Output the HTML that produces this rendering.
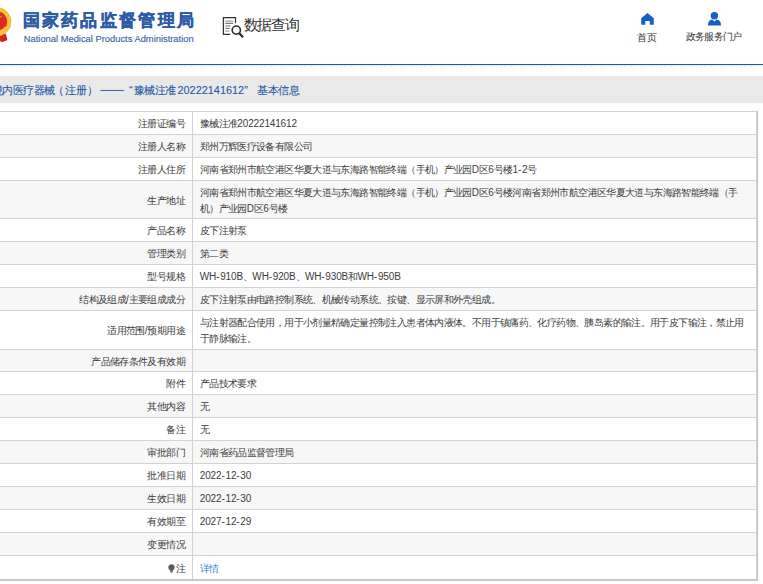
<!DOCTYPE html>
<html><head><meta charset="utf-8">
<style>
html,body{margin:0;padding:0;width:763px;height:584px;overflow:hidden;background:#fff;}
body{position:relative;font-family:"Liberation Sans",sans-serif;color:#333;}
i{font-style:normal;}
.a{position:absolute;white-space:nowrap;}
#hdr-title{left:22.5px;top:9.2px;font-size:17px;font-weight:bold;color:#2d5ca6;letter-spacing:2.3px;line-height:24px;-webkit-text-stroke:0.4px #2d5ca6;}
#hdr-en{left:23.8px;top:33.1px;font-size:9.35px;color:#3a64a8;-webkit-text-stroke:0.15px #3a64a8;line-height:12px;}
#sq{left:243.5px;top:14px;font-size:15px;color:#333;line-height:22px;letter-spacing:-1.25px;}
#home-t{left:637px;top:31px;font-size:10px;line-height:14px;color:#333;letter-spacing:-0.3px;}
#gov-t{left:686px;top:30px;font-size:10px;line-height:14px;color:#333;letter-spacing:-0.8px;}
#bline{left:0;top:64px;width:763px;height:1px;background:#2c5684;}
#hatch{left:0;top:65px;width:763px;height:3px;
 background:
  linear-gradient(#def4fb,#def4fb) 0 0/100% 1px no-repeat,
  repeating-linear-gradient(90deg,#fff 0 1px,#d6e2f2 1px 2px,#fff 2px 4px,#d6e2f2 4px 5px,#fff 5px 10px) 0 1px/100% 1px no-repeat,
  repeating-linear-gradient(90deg,#ececec 0 1px,#fff 1px 3px,#ececec 3px 4px,#fff 4px 6px,#ececec 6px 7px,#fff 7px 10px) 0 2px/100% 1px no-repeat;}
#band{left:0;top:76px;width:763px;height:27px;background:#e9e9e9;}
.bt{top:82px;font-size:11px;line-height:16px;color:#1f5aa8;letter-spacing:-0.5px;-webkit-text-stroke:0.1px #1f5aa8;}
.bdash{font-size:11.6px;letter-spacing:0;margin-top:-1px}
.bd{font-size:10.9px;letter-spacing:0}
.row{position:absolute;left:0;width:756px;border-bottom:1px solid #d2d2d2;}
.row.g{background:#f7f7f7;}
.lab{position:absolute;right:571px;font-size:10px;letter-spacing:-0.15px;line-height:16px;text-align:right;white-space:nowrap;color:#3c3c3c;}
.val{position:absolute;left:199.8px;font-size:10px;letter-spacing:-0.15px;line-height:16px;white-space:nowrap;color:#3c3c3c;}
.c{font-size:10px;letter-spacing:-0.62px;}
.h{letter-spacing:0.7px;}
.link{color:#2f84dc;}
.pin{vertical-align:-1px;margin-right:1px;}
#vdiv{left:192px;top:111px;width:1px;height:468px;background:#d2d2d2;}
#rb{left:756px;top:111px;width:2px;height:470px;background:linear-gradient(90deg,#d4d4d4 0 1px,#c2c2c2 1px 2px);}
#tb{left:0;top:111px;width:757px;height:1px;background:#d2d2d2;}
#bb{left:0;top:579px;width:758px;height:2px;background:#c8c8c8;}

</style></head><body>
<svg class="a" style="left:0;top:0" width="20" height="50" viewBox="0 0 20 50">
 <path d="M-3 35.5 L5.8 33.6 L7.2 40 L1.2 42.2 Z" fill="#d4261b"/>
 <circle cx="-3.4" cy="21.8" r="14.6" fill="#f3c43a"/>
 <circle cx="-3.4" cy="21.8" r="14.3" fill="none" stroke="#eab23c" stroke-width="0.6"/>
 <circle cx="-3.4" cy="21.8" r="10.6" fill="#de2b1f"/>
 <path d="M-6 31.5 Q2 32.5 6.2 27" stroke="#f3c43a" stroke-width="2.2" fill="none"/>
 <path d="M0 16.3 L2.2 16.6 L0.4 17.6 Z" fill="#f1c33a"/>
 <path d="M2 42 L7.2 40 L6.5 37 Z" fill="#c01f16"/>
</svg>
<div id="hdr-title" class="a">国家药品监督管理局</div>
<div id="hdr-en" class="a">National Medical Products Administration</div>
<svg class="a" style="left:220px;top:14px" width="26" height="26" viewBox="0 0 26 26">
 <path d="M16.1 3.7 H3.4 V20.3 H10.2" fill="none" stroke="#333" stroke-width="1.3"/>
 <path d="M15.5 3.1 V9.2" fill="none" stroke="#333" stroke-width="1.2"/>
 <path d="M5.3 7.1 H13.3" stroke="#888" stroke-width="1"/>
 <path d="M5.3 9.3 H13.3" stroke="#444" stroke-width="0.9"/>
 <path d="M5.3 11.9 H10.6" stroke="#777" stroke-width="1"/>
 <path d="M5.3 14.3 H9.6" stroke="#444" stroke-width="0.9"/>
 <path d="M5.3 17 H9.2" stroke="#888" stroke-width="1"/>
 <circle cx="16.3" cy="16.1" r="4.1" fill="#fff" stroke="#2a2a2a" stroke-width="1.6"/>
 <path d="M19.3 19.2 L23 23.2" stroke="#2a2a2a" stroke-width="2.3"/>
</svg>
<div id="sq" class="a">数据查询</div>
<svg class="a" style="left:640px;top:12px" width="15" height="14" viewBox="0 0 15 14">
 <path d="M7.5 0.9 L13.8 6.3 V12.8 H9.7 V9 H5.3 V12.8 H1.2 V6.3 Z" fill="#1560c2"/>
</svg>
<div id="home-t" class="a">首页</div>
<svg class="a" style="left:707px;top:11px" width="15" height="15" viewBox="0 0 15 15">
 <circle cx="7.4" cy="4.8" r="3.7" fill="#1560c2"/>
 <path d="M1 14.4 Q1 9 5.2 8.6 L7.4 10.6 L9.6 8.6 Q14 9 14 14.4 Z" fill="#1560c2"/>
</svg>
<div id="gov-t" class="a">政务服务门户</div>
<div id="bline" class="a"></div>
<div id="hatch" class="a"></div>
<div id="band" class="a"></div>
<div class="a bt" style="left:-8.3px">境内医疗器械</div>
<div class="a bt" style="left:52.7px">（</div>
<div class="a bt" style="left:-8.3px">&#12288;&#12288;&#12288;&#12288;&#12288;&#12288;&#12288;注册</div>
<div class="a bt" style="left:86.6px">）</div>
<div class="a bt bdash" style="left:100.5px">——</div>
<div class="a bt" style="left:129px">“</div>
<div class="a bt" style="left:133.5px">豫械注准</div>
<div class="a bt bd" style="left:177.5px">20222141612</div>
<div class="a bt" style="left:244.3px">”</div>
<div class="a bt" style="left:257.2px">基本信息</div>
<div id="tb" class="a"></div>
<div class="row" style="top:112px;height:22px"><span class="lab" style="top:4.0px"><i class="c">注册证编号</i></span><span class="val" style="top:4.0px"><i class="c">豫械注准</i>20222141612</span></div>
<div class="row g" style="top:135px;height:22px"><span class="lab" style="top:4.0px"><i class="c">注册人名称</i></span><span class="val" style="top:4.0px"><i class="c">郑州万辉医疗设备有限公司</i></span></div>
<div class="row" style="top:158px;height:22px"><span class="lab" style="top:4.0px"><i class="c">注册人住所</i></span><span class="val" style="top:4.0px"><i class="c">河南省郑州市航空港区华夏大道与东海路智能终端（手机）产业园</i>D<i class="c">区</i>6<i class="c">号楼</i>1<i class="h">-</i>2<i class="c">号</i></span></div>
<div class="row g" style="top:181px;height:37px"><span class="lab" style="top:11.5px"><i class="c">生产地址</i></span><span class="val" style="top:3.5px"><i class="c">河南省郑州市航空港区华夏大道与东海路智能终端（手机）产业园</i>D<i class="c">区</i>6<i class="c">号楼河南省郑州市航空港区华夏大道与东海路智能终端（手</i><br><i class="c">机）产业园</i>D<i class="c">区</i>6<i class="c">号楼</i></span></div>
<div class="row" style="top:219px;height:22px"><span class="lab" style="top:4.0px"><i class="c">产品名称</i></span><span class="val" style="top:4.0px"><i class="c">皮下注射泵</i></span></div>
<div class="row g" style="top:242px;height:22px"><span class="lab" style="top:4.0px"><i class="c">管理类别</i></span><span class="val" style="top:4.0px"><i class="c">第二类</i></span></div>
<div class="row" style="top:265px;height:22px"><span class="lab" style="top:4.0px"><i class="c">型号规格</i></span><span class="val" style="top:4.0px">WH<i class="h">-</i>910B<i class="c">、</i>WH<i class="h">-</i>920B<i class="c">、</i>WH<i class="h">-</i>930B<i class="c">和</i>WH<i class="h">-</i>950B</span></div>
<div class="row g" style="top:288px;height:22px"><span class="lab" style="top:4.0px"><i class="c">结构及组成</i>/<i class="c">主要组成成分</i></span><span class="val" style="top:4.0px"><i class="c">皮下注射泵由电路控制系统、机械传动系统、按键、显示屏和外壳组成。</i></span></div>
<div class="row" style="top:311px;height:38px"><span class="lab" style="top:12.0px"><i class="c">适用范围</i>/<i class="c">预期用途</i></span><span class="val" style="top:4.0px"><i class="c">与注射器配合使用，用于小剂量精确定量控制注入患者体内液体。不用于镇痛药、化疗药物、胰岛素的输注。用于皮下输注，禁止用</i><br><i class="c">于静脉输注。</i></span></div>
<div class="row g" style="top:350px;height:21px"><span class="lab" style="top:3.5px"><i class="c">产品储存条件及有效期</i></span></div>
<div class="row" style="top:372px;height:22px"><span class="lab" style="top:4.0px"><i class="c">附件</i></span><span class="val" style="top:4.0px"><i class="c">产品技术要求</i></span></div>
<div class="row g" style="top:395px;height:22px"><span class="lab" style="top:4.0px"><i class="c">其他内容</i></span><span class="val" style="top:4.0px"><i class="c">无</i></span></div>
<div class="row" style="top:418px;height:22px"><span class="lab" style="top:4.0px"><i class="c">备注</i></span><span class="val" style="top:4.0px"><i class="c">无</i></span></div>
<div class="row g" style="top:441px;height:22px"><span class="lab" style="top:4.0px"><i class="c">审批部门</i></span><span class="val" style="top:4.0px"><i class="c">河南省药品监督管理局</i></span></div>
<div class="row" style="top:464px;height:22px"><span class="lab" style="top:4.0px"><i class="c">批准日期</i></span><span class="val" style="top:4.0px">2022<i class="h">-</i>12<i class="h">-</i>30</span></div>
<div class="row g" style="top:487px;height:22px"><span class="lab" style="top:4.0px"><i class="c">生效日期</i></span><span class="val" style="top:4.0px">2022<i class="h">-</i>12<i class="h">-</i>30</span></div>
<div class="row" style="top:510px;height:22px"><span class="lab" style="top:4.0px"><i class="c">有效期至</i></span><span class="val" style="top:4.0px">2027<i class="h">-</i>12<i class="h">-</i>29</span></div>
<div class="row g" style="top:533px;height:22px"><span class="lab" style="top:4.0px"><i class="c">变更情况</i></span></div>
<div class="row" style="top:556px;height:23px"><span class="lab" style="top:4.5px"><svg class="pin" width="7" height="9" viewBox="0 0 7 9"><path d="M3.5 0.3 C1.5 0.3 0.3 1.8 0.3 3.5 C0.3 5 1.6 6 2.3 6.6 L2.4 8.6 H4.6 L4.7 6.6 C5.4 6 6.7 5 6.7 3.5 C6.7 1.8 5.5 0.3 3.5 0.3 Z" fill="#5a5a5a"/></svg><i class="c">注</i></span><span class="val link" style="top:4.5px"><i class="c">详情</i></span></div>
<div id="vdiv" class="a"></div>
<div id="rb" class="a"></div>
<div id="bb" class="a"></div>
</body></html>
